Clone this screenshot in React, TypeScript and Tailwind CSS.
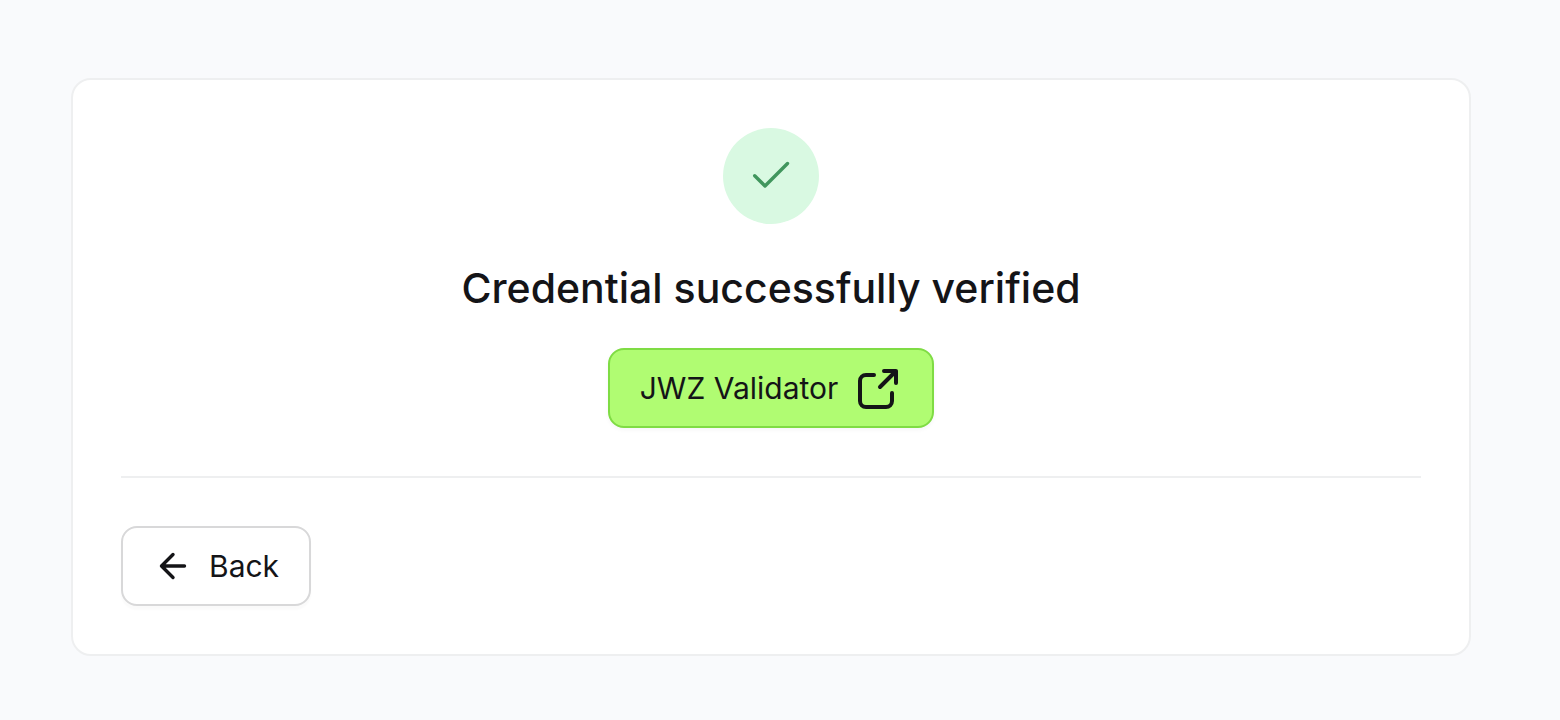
export default function App() {
  return (
    <main className="min-h-screen bg-[#f9fafc] pt-[78px] pr-[89px] pb-16 pl-[71px] font-['Inter','Liberation_Sans',sans-serif] text-[#141417]">
      <section className="rounded-[20px] border-2 border-[#eeeff0] bg-white p-12">
        <div className="flex flex-col items-center">
          <div className="flex size-24 items-center justify-center rounded-full bg-[#d9f9e2]">
            <svg viewBox="0 0 48 48" className="size-12" fill="none" stroke="#40965d" strokeWidth="3.4" strokeLinecap="round" strokeLinejoin="round" aria-hidden="true">
              <path d="M7.7 23.7 18 34 40.5 11.5" />
            </svg>
          </div>
          <h1 className="mt-8 text-center text-[41px] leading-[64px] font-medium">Credential successfully verified</h1>
          <a href="#validator" className="mt-7 flex h-20 items-center gap-4 rounded-2xl border-2 border-[#7fdc44] bg-[#b0fc72] px-[30px] text-[30px] shadow-[0_2px_4px_rgba(16,24,40,0.04)]">
            JWZ Validator
            <svg viewBox="0 0 48 48" className="size-12" fill="none" stroke="#141417" strokeWidth="4" strokeLinecap="round" strokeLinejoin="round" aria-hidden="true">
              <path d="M20 11h-8a6 6 0 0 0-6 6v20a6 6 0 0 0 6 6h20a6 6 0 0 0 6-6v-8M30 7h12v12M42 7 26 23" />
            </svg>
          </a>
        </div>
        <hr className="my-12 border-t-2 border-[#eeeff0]" />
        <button type="button" className="flex h-20 items-center gap-4 rounded-2xl border-2 border-[#d8d8d9] bg-white px-[30px] text-[30px] shadow-[0_4px_2px_rgba(0,0,0,0.02)]">
          <svg viewBox="0 0 40 40" className="size-10" fill="none" stroke="#141417" strokeWidth="3.4" strokeLinecap="round" strokeLinejoin="round" aria-hidden="true">
            <path d="M31.5 20H8.5M20 8.5 8.5 20 20 31.5" />
          </svg>
          Back
        </button>
      </section>
    </main>
  );
}
